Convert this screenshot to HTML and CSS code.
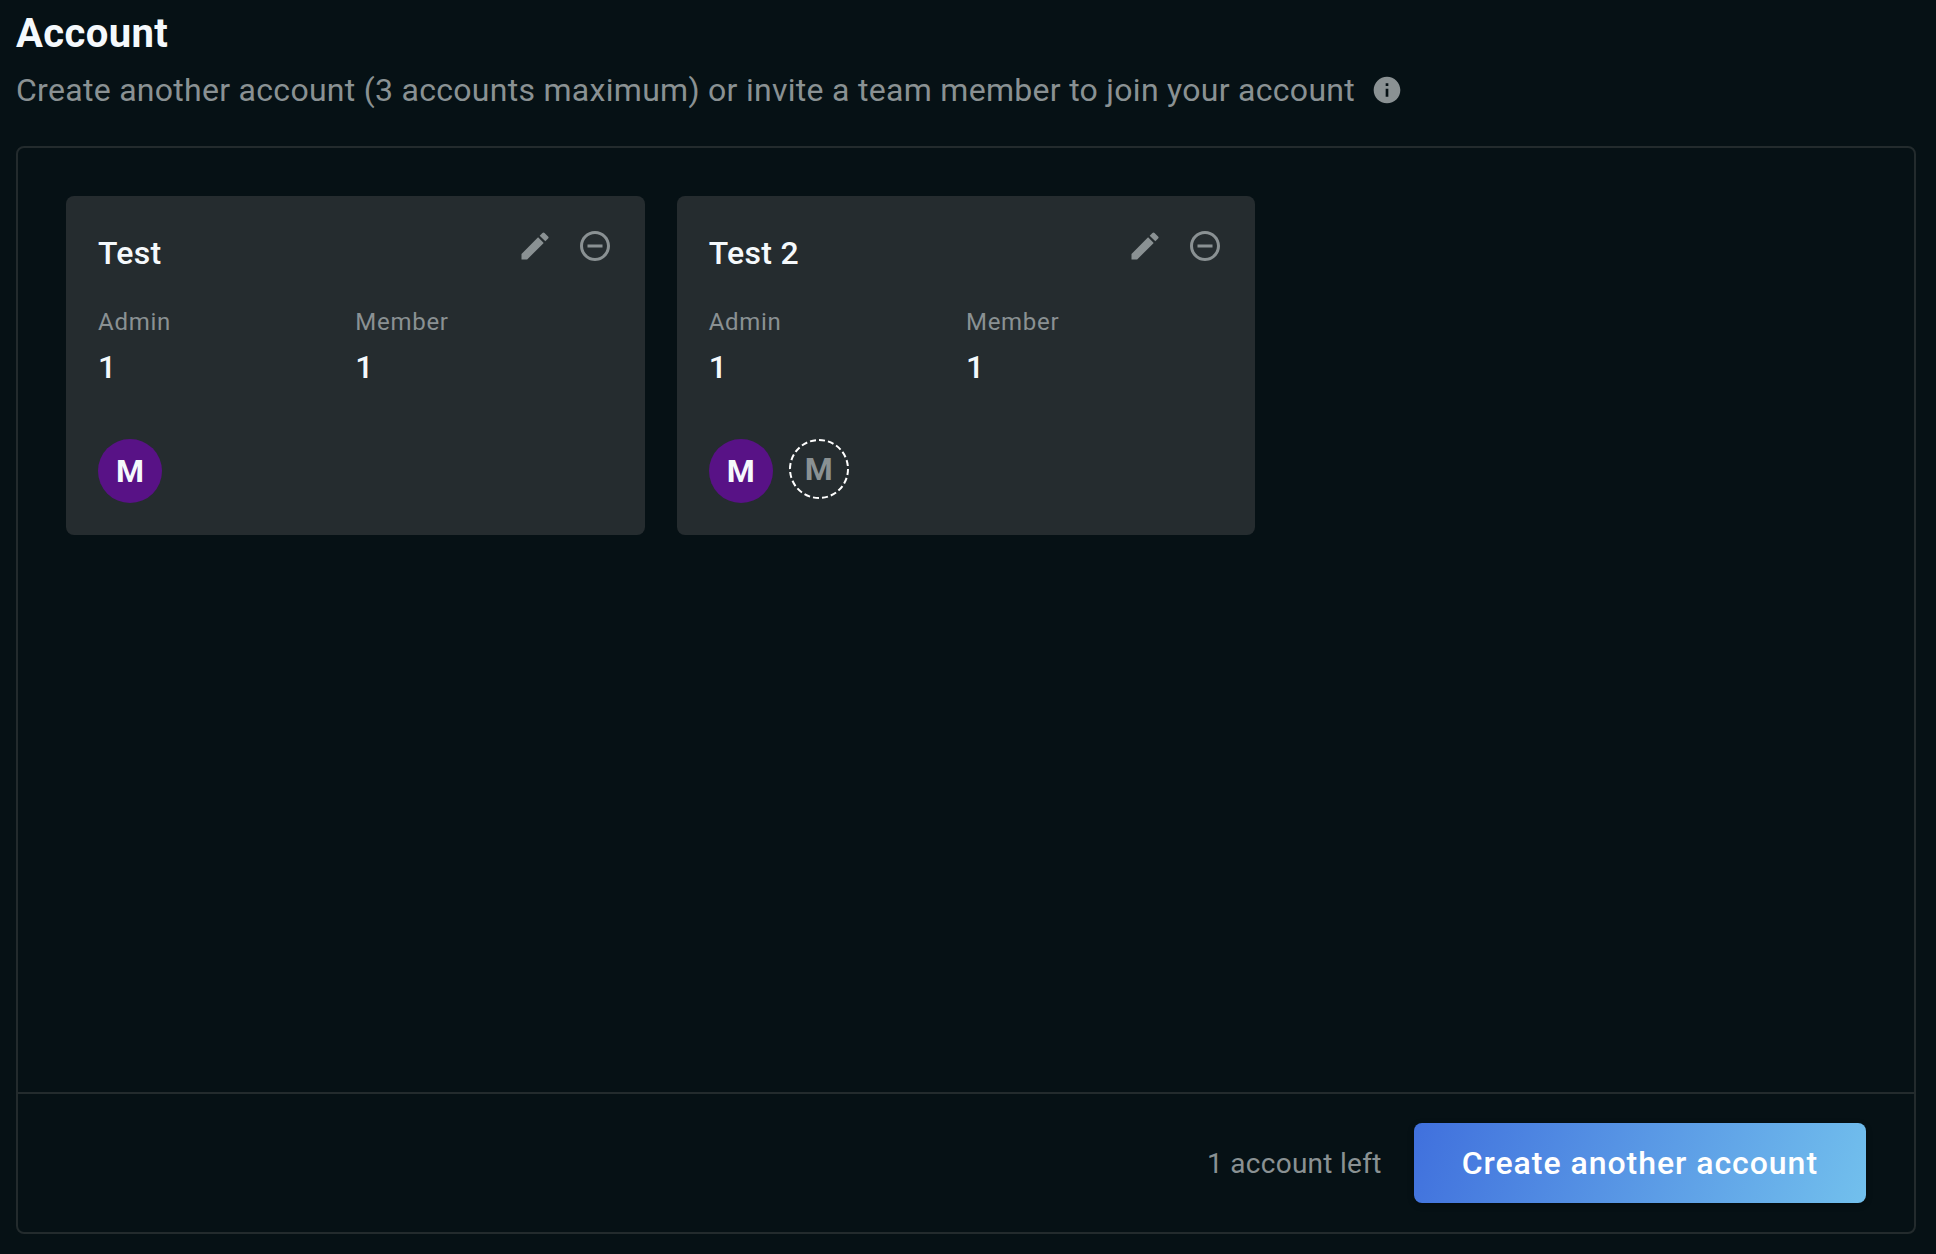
FILE: index.html
```html
<!DOCTYPE html>
<html lang="en">
<head>
    <meta charset="UTF-8">
    <meta name="viewport" content="width=device-width, initial-scale=1.0">
    <title>Account</title>
    <link rel="stylesheet" href="styles.css">
</head>
<body>
    <main class="page">
        <h1>Account</h1>
        <div class="subtitle">
            <p>Create another account (3 accounts maximum) or invite a team member to join your account</p>
            <button type="button" class="icon-btn info-btn" aria-label="More information">
                <svg viewBox="0 0 24 24"><path d="M12 2C6.48 2 2 6.48 2 12s4.48 10 10 10 10-4.48 10-10S17.52 2 12 2zm1 15h-2v-6h2v6zm0-8h-2V7h2v2z"/></svg>
            </button>
        </div>

        <section class="panel">
            <div class="account-list">
                <article class="card">
                    <div class="card-header">
                        <h2>Test</h2>
                        <div class="card-actions">
                            <button type="button" class="icon-btn" aria-label="Edit Test">
                                <svg viewBox="0 0 24 24"><path d="M3 17.25V21h3.75L17.81 9.94l-3.75-3.75L3 17.25zM20.71 7.04a1 1 0 0 0 0-1.41l-2.34-2.34a1 1 0 0 0-1.41 0l-1.83 1.83 3.75 3.75 1.83-1.83z"/></svg>
                            </button>
                            <button type="button" class="icon-btn" aria-label="Remove Test">
                                <svg viewBox="0 0 24 24"><path d="M7 11v2h10v-2H7zm5-9C6.48 2 2 6.48 2 12s4.48 10 10 10 10-4.48 10-10S17.52 2 12 2zm0 18c-4.41 0-8-3.59-8-8s3.59-8 8-8 8 3.59 8 8-3.59 8-8 8z"/></svg>
                            </button>
                        </div>
                    </div>
                    <dl class="stats">
                        <div>
                            <dt>Admin</dt>
                            <dd>1</dd>
                        </div>
                        <div>
                            <dt>Member</dt>
                            <dd>1</dd>
                        </div>
                    </dl>
                    <div class="avatars">
                        <span class="avatar">M</span>
                    </div>
                </article>

                <article class="card">
                    <div class="card-header">
                        <h2>Test 2</h2>
                        <div class="card-actions">
                            <button type="button" class="icon-btn" aria-label="Edit Test 2">
                                <svg viewBox="0 0 24 24"><path d="M3 17.25V21h3.75L17.81 9.94l-3.75-3.75L3 17.25zM20.71 7.04a1 1 0 0 0 0-1.41l-2.34-2.34a1 1 0 0 0-1.41 0l-1.83 1.83 3.75 3.75 1.83-1.83z"/></svg>
                            </button>
                            <button type="button" class="icon-btn" aria-label="Remove Test 2">
                                <svg viewBox="0 0 24 24"><path d="M7 11v2h10v-2H7zm5-9C6.48 2 2 6.48 2 12s4.48 10 10 10 10-4.48 10-10S17.52 2 12 2zm0 18c-4.41 0-8-3.59-8-8s3.59-8 8-8 8 3.59 8 8-3.59 8-8 8z"/></svg>
                            </button>
                        </div>
                    </div>
                    <dl class="stats">
                        <div>
                            <dt>Admin</dt>
                            <dd>1</dd>
                        </div>
                        <div>
                            <dt>Member</dt>
                            <dd>1</dd>
                        </div>
                    </dl>
                    <div class="avatars">
                        <span class="avatar">M</span>
                        <span class="avatar pending">
                            <svg viewBox="0 0 60 60"><circle cx="30" cy="30" r="29" pathLength="180"/></svg>
                            M
                        </span>
                    </div>
                </article>
            </div>

            <footer class="panel-footer">
                <span class="remaining">1 account left</span>
                <button type="button" class="create-btn">Create another account</button>
            </footer>
        </section>
    </main>
</body>
</html>
```
FILE: styles.css
```css
* {
    box-sizing: border-box;
}
body {
    margin: 0;
    background-color: #061115;
    color: #f5f9fc;
    font-family: Roboto, "Liberation Sans", sans-serif;
}
h1, h2, p, dl, dd {
    margin: 0;
}
.page {
    display: flex;
    flex-direction: column;
    min-height: 100vh;
    padding: 10px 20px 20px 16px;
}
h1 {
    font-size: 40px;
    font-weight: 700;
    line-height: 48px;
    letter-spacing: 0.01em;
}
.subtitle {
    display: flex;
    align-items: center;
    gap: 16px;
    margin: 8px 0 32px;
    color: #8a9193;
    font-size: 32px;
    line-height: 48px;
    letter-spacing: 0.009em;
}
.icon-btn {
    flex: none;
    width: 36px;
    height: 36px;
    padding: 0;
    border: none;
    background: none;
    color: #8a9193;
    cursor: pointer;
}
.icon-btn svg {
    display: block;
    width: 100%;
    height: 100%;
    fill: currentColor;
}
.info-btn {
    width: 32px;
    height: 32px;
}
.panel {
    display: flex;
    flex: 1;
    flex-direction: column;
    border: 2px solid #232b2d;
    border-radius: 8px;
}
.account-list {
    display: grid;
    flex: 1;
    grid-template-columns: repeat(3, 1fr);
    align-items: start;
    gap: 32px;
    padding: 48px;
}
.card {
    padding: 32px;
    border-radius: 8px;
    background-color: #252c2f;
}
.card-header {
    display: flex;
    justify-content: space-between;
    align-items: flex-start;
}
h2 {
    padding-top: 2px;
    font-size: 32px;
    font-weight: 500;
    line-height: 46px;
    letter-spacing: 0.01em;
}
.card-actions {
    display: flex;
    gap: 24px;
}
.stats {
    display: grid;
    grid-template-columns: repeat(2, 1fr);
    margin-top: 28px;
}
dt {
    color: #8a9193;
    font-size: 24px;
    line-height: 36px;
    letter-spacing: 0.03em;
}
dd {
    margin-top: 4px;
    font-size: 32px;
    font-weight: 500;
    line-height: 46px;
}
.avatars {
    display: flex;
    gap: 16px;
    margin-top: 49px;
}
.avatar {
    width: 64px;
    height: 64px;
    border-radius: 50%;
    background-color: #581286;
    font-size: 32px;
    font-weight: 700;
    line-height: 64px;
    text-align: center;
}
/* invited but not joined yet */
.avatar.pending {
    position: relative;
    width: 60px;
    height: 60px;
    background: none;
    color: #8a9193;
    line-height: 60px;
}
.pending svg {
    position: absolute;
    inset: 0;
    fill: none;
    stroke: #fff;
    stroke-width: 2;
    stroke-dasharray: 6 3;
}
.panel-footer {
    display: flex;
    justify-content: flex-end;
    align-items: center;
    gap: 32px;
    padding: 29px 48px;
    border-top: 2px solid #232b2d;
}
.remaining {
    color: #8a9193;
    font-size: 28px;
    letter-spacing: 0.01em;
}
.create-btn {
    height: 80px;
    padding: 0 48px;
    border: none;
    border-radius: 8px;
    background: linear-gradient(110deg, #4070dd, #72c0ed);
    box-shadow: 0 2px 6px rgba(0, 0, 0, 0.3);
    color: #fff;
    font-family: inherit;
    font-size: 32px;
    font-weight: 500;
    letter-spacing: 0.03em;
    cursor: pointer;
}
```
